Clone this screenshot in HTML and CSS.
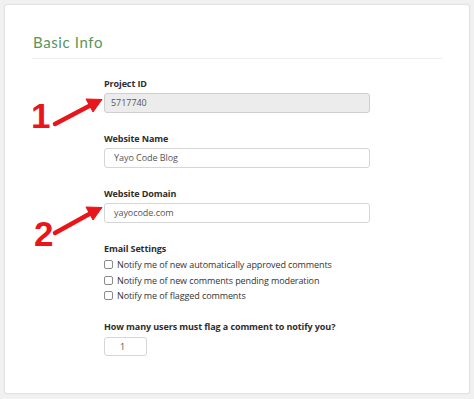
FILE: index.html
```html
<!DOCTYPE html>
<html>
<head>
<meta charset="utf-8">
<link rel="stylesheet" href="styles.css">
</head>
<body>
<div class="card">
  <h2 class="title">Basic Info</h2>
  <div class="divider"></div>
  <form class="form">
    <div class="group">
      <label class="label">Project ID</label>
      <div class="input readonly">5717740</div>
    </div>
    <div class="group">
      <label class="label">Website Name</label>
      <div class="input">Yayo Code Blog</div>
    </div>
    <div class="group">
      <label class="label">Website Domain</label>
      <div class="input">yayocode.com</div>
    </div>
    <div class="group">
      <label class="label">Email Settings</label>
      <div class="checks">
        <div class="check"><span class="box"></span>Notify me of new automatically approved comments</div>
        <div class="check"><span class="box"></span>Notify me of new comments pending moderation</div>
        <div class="check"><span class="box"></span>Notify me of flagged comments</div>
      </div>
    </div>
    <div class="group last">
      <label class="label">How many users must flag a comment to notify you?</label>
      <div class="input small">1</div>
    </div>
  </form>
</div>
<span class="num num1">1</span>
<span class="num num2">2</span>
<svg class="arrows" width="474" height="399" viewBox="0 0 474 399">
  <g fill="#e8161b" stroke="#e8161b" stroke-linejoin="round">
    <line x1="55" y1="124" x2="92" y2="104.5" stroke-width="4.5" stroke-linecap="round"/>
    <polygon points="102,99.5 86,99 93,112" stroke-width="1"/>
    <line x1="55" y1="233" x2="92" y2="212.5" stroke-width="4.5" stroke-linecap="round"/>
    <polygon points="102,207.5 86,207 93,220" stroke-width="1"/>
  </g>
</svg>
</body>
</html>
```

FILE: styles.css
```css
html, body {
  margin: 0;
  padding: 0;
}
body {
  background: #f1f1f1;
  width: 474px;
  height: 399px;
  position: relative;
  font-family: "Open Sans", "Noto Sans", sans-serif;
  color: #333;
  overflow: hidden;
}
.card {
  position: absolute;
  left: 4px;
  top: 4px;
  width: 464px;
  height: 388px;
  background: #fff;
  border: 1px solid #e2e2e2;
  border-radius: 3px;
  box-shadow: 0 0 2px rgba(0,0,0,0.06);
}
.title {
  margin: 27px 0 0 28px;
  font-family: "Lato", "Noto Sans", sans-serif;
  font-weight: 400;
  font-size: 15px;
  line-height: 20px;
  letter-spacing: 0.6px;
  color: #5a955b;
}
.divider {
  margin: 6px 27px 0 27px;
  height: 1px;
  background: #ececec;
}
.form {
  margin: 18px 0 0 99px;
  width: 266px;
}
.group {
  margin-bottom: 19px;
}
.label {
  display: block;
  font-size: 9px;
  letter-spacing: -0.1px;
  font-weight: 700;
  line-height: 14px;
  color: #2e2e2e;
}
.input {
  margin-top: 2px;
  box-sizing: border-box;
  height: 20px;
  border: 1px solid #d6d6d6;
  border-radius: 3px;
  padding: 0 8px 0 9px;
  font-size: 9px;
  letter-spacing: -0.05px;
  line-height: 18px;
  color: #555;
  background: #fff;
}
.input.readonly {
  background: #ececec;
  border-color: #cfcfcf;
  padding-left: 6px;
}
.checks {
  margin-top: 1px;
}
.check {
  display: flex;
  align-items: center;
  height: 15.5px;
  font-size: 9px;
  letter-spacing: -0.1px;
  color: #333;
}
.box {
  box-sizing: border-box;
  width: 9px;
  height: 9px;
  border: 1px solid #8a8a8a;
  border-radius: 2px;
  margin-right: 4px;
  flex: none;
}
.group:nth-child(4) {
  margin-bottom: 16.5px;
}
.input.small {
  width: 43px;
  height: 19px;
  margin-top: 3px;
  padding: 0 0 0 15px;
  line-height: 17px;
}
.num {
  position: absolute;
  font-family: "Liberation Sans", Arial, sans-serif;
  font-weight: 700;
  font-size: 35px;
  line-height: 1;
  color: #e8161b;
}
.num1 {
  left: 31px;
  top: 98px;
}
.num2 {
  left: 34px;
  top: 216px;
}
.arrows {
  position: absolute;
  left: 0;
  top: 0;
  pointer-events: none;
}
```
